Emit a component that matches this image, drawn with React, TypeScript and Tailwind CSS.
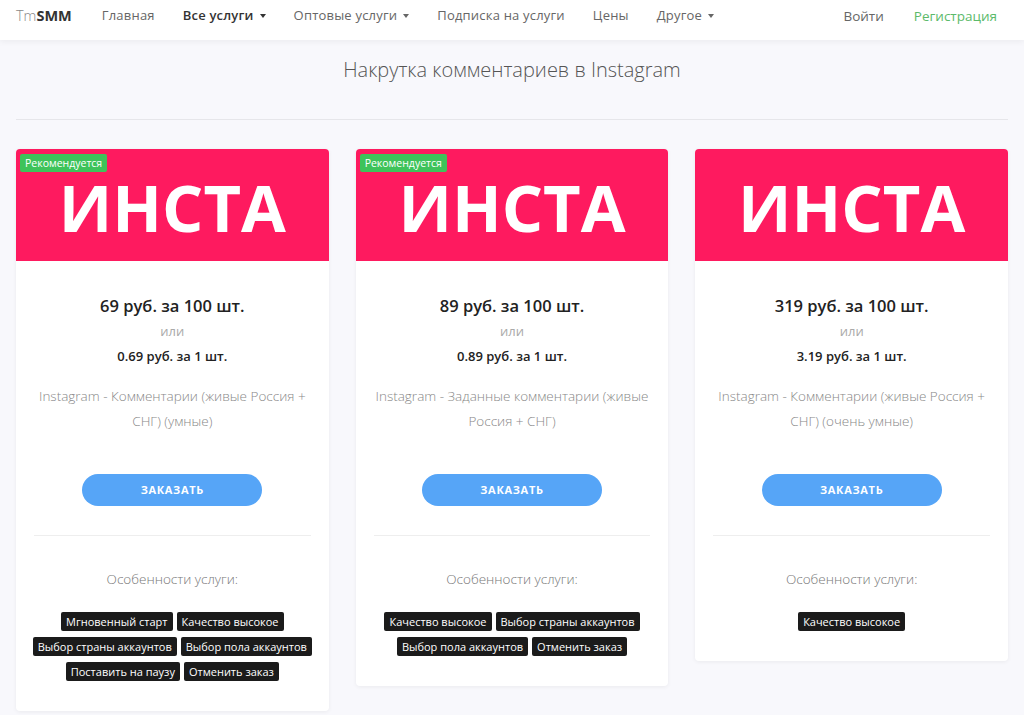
import React from 'react'

type Service = {
  price: string
  unit: string
  title: string
  recommended: boolean
  tags: string[]
}

const services: Service[] = [
  {
    price: '69 руб. за 100 шт.',
    unit: '0.69 руб. за 1 шт.',
    title: 'Instagram - Комментарии (живые Россия + СНГ) (умные)',
    recommended: true,
    tags: ['Мгновенный старт', 'Качество высокое', 'Выбор страны аккаунтов', 'Выбор пола аккаунтов', 'Поставить на паузу', 'Отменить заказ'],
  },
  {
    price: '89 руб. за 100 шт.',
    unit: '0.89 руб. за 1 шт.',
    title: 'Instagram - Заданные комментарии (живые Россия + СНГ)',
    recommended: true,
    tags: ['Качество высокое', 'Выбор страны аккаунтов', 'Выбор пола аккаунтов', 'Отменить заказ'],
  },
  {
    price: '319 руб. за 100 шт.',
    unit: '3.19 руб. за 1 шт.',
    title: 'Instagram - Комментарии (живые Россия + СНГ) (очень умные)',
    recommended: false,
    tags: ['Качество высокое'],
  },
]

const Caret = () => (
  <span className="ml-[6px] inline-block h-0 w-0 border-x-[3.5px] border-t-[4px] border-x-transparent border-t-current align-middle" />
)

const NavItem = ({ label, dropdown, active }: { label: string; dropdown?: boolean; active?: boolean }) => (
  <a
    href="#"
    className={`flex items-center text-[13px] tracking-[0.2px] ${active ? 'font-semibold text-[#333]' : 'text-[#666]'}`}
  >
    {label}
    {dropdown && <Caret />}
  </a>
)

const ServiceCard = ({ service }: { service: Service }) => (
  <div className="overflow-hidden rounded-[4px] bg-white shadow-[0_1px_4px_rgba(0,0,0,0.06)]">
    {/* Banner */}
    <div className="relative flex h-[112px] items-center justify-center bg-[#fe1a5f]">
      {service.recommended && (
        <span className="absolute left-[4px] top-[5px] rounded-[2px] bg-[#3ec35a] px-[5px] text-[10.5px] leading-[18px] text-white">
          Рекомендуется
        </span>
      )}
      <div className="mt-[4px] h-[46px] text-[65px] font-bold leading-[46px] text-white">ИНСТА</div>
    </div>

    <div className="px-4 pb-[30px] pt-[33px] text-center">
      <div className="text-[16.5px] font-semibold leading-[24px] text-[#222]">{service.price}</div>
      <div className="mt-[3px] text-[13px] leading-[20px] text-[#aaa]">или</div>
      <div className="mt-[5px] text-[13px] font-semibold leading-[20px] text-[#222]">{service.unit}</div>
      <div className="mt-[18px] text-[13.5px] font-light leading-[25px] text-[#888]">
        {service.title}
      </div>

      <button className="mx-auto mt-[40px] block h-[32px] w-[180px] rounded-full bg-[#56a5f7] text-[11px] font-bold uppercase tracking-[0.7px] text-white">
        Заказать
      </button>

      <div className="mx-[2px] mt-[29px] border-t border-[#eee]" />

      <div className="mt-[32px] text-[13.5px] font-light leading-[22px] text-[#777]">Особенности услуги:</div>

      <div className="-mx-2 mt-[22px] flex flex-wrap justify-center gap-x-[4px] gap-y-[6px]">
        {service.tags.map((tag) => (
          <span key={tag} className="rounded-[2px] bg-[#1b1b1b] px-[5px] text-[11px] leading-[19px] text-white">
            {tag}
          </span>
        ))}
      </div>
    </div>
  </div>
)

export default function App() {
  return (
    <div className="min-h-[715px] bg-[#f8f8fc] font-['Open_Sans',sans-serif]">
      {/* Navbar */}
      <nav className="relative z-10 flex h-[40px] items-center bg-white pb-[8px] pl-4 pr-[27px] shadow-[0_2px_6px_rgba(0,0,0,0.05)]">
        <a href="#" className="text-[14.5px]">
          <span className="font-light text-[#888]">Tm</span>
          <span className="font-bold text-[#333]">SMM</span>
        </a>
        <div className="ml-[30px] flex items-center gap-[28px]">
          <NavItem label="Главная" />
          <NavItem label="Все услуги" dropdown active />
          <NavItem label="Оптовые услуги" dropdown />
          <NavItem label="Подписка на услуги" />
          <NavItem label="Цены" />
          <NavItem label="Другое" dropdown />
        </div>
        <div className="ml-auto flex items-center gap-[30px] text-[13.5px]">
          <a href="#" className="text-[#666]">Войти</a>
          <a href="#" className="text-[#5cba6a]">Регистрация</a>
        </div>
      </nav>

      <main className="px-4">
        <h1 className="pt-[15px] text-center text-[20px] font-light leading-[30px] text-[#555]">
          Накрутка комментариев в Instagram
        </h1>
        <div className="mt-[34px] border-t border-[#e6e6ea]" />

        <div className="mt-[29px] grid grid-cols-3 items-start gap-[27px]">
          {services.map((s) => (
            <ServiceCard key={s.price} service={s} />
          ))}
        </div>
      </main>
    </div>
  )
}
